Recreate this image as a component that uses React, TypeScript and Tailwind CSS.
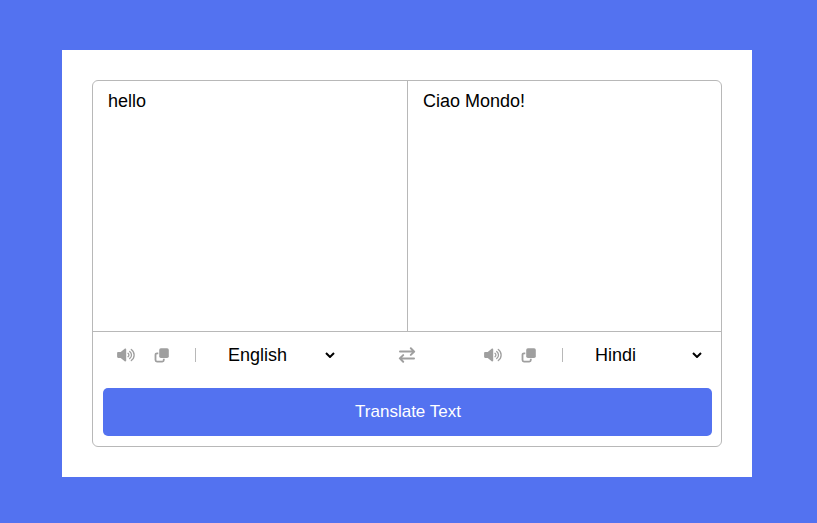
function VolumeIcon() {
  return (
    <svg className="h-4 w-[19px]" viewBox="0 0 19 16" fill="none">
      <path fill="currentColor" d="M1.2 5.1h2.5L7.7 1.8c.6-.5 1.5-.1 1.5.7v11c0 .8-.9 1.2-1.5.7l-4-3.3H1.2C.6 10.9.1 10.4.1 9.8V6.2c0-.6.5-1.1 1.1-1.1Z" />
      <path stroke="currentColor" strokeWidth="1.3" strokeLinecap="round" d="M11 6.3c1.2.9 1.2 2.5 0 3.4M12.7 4.4c2.4 1.9 2.4 5.3 0 7.2M14.3 2.4c3.8 2.9 3.8 8.3 0 11.2" />
    </svg>
  );
}

function CopyIcon() {
  return (
    <svg className="size-[15px]" viewBox="0 0 15 15" fill="none">
      <rect x="5.2" y="0.3" width="9.6" height="9.6" rx="1.7" fill="currentColor" />
      <path stroke="currentColor" strokeWidth="1.8" strokeLinejoin="round" d="M4.3 5.3H3c-.9 0-1.5.6-1.5 1.5v5.3c0 .9.6 1.5 1.5 1.5h5.3c.9 0 1.5-.6 1.5-1.5v-1.3" />
    </svg>
  );
}

function SwapIcon() {
  return (
    <svg className="ml-[46px] h-[18px] w-[18px] text-[#9f9f9f]" viewBox="0 0 18 18" fill="none" stroke="currentColor" strokeWidth="2" strokeLinecap="round" strokeLinejoin="round">
      <path d="M2 5.6h14M12.8 2.3 16.2 5.6l-3.4 3.3M16 12.4H2M5.2 9.1 1.8 12.4l3.4 3.3" />
    </svg>
  );
}

function Controls({ language }: { language: string }) {
  return (
    <div className="flex h-full w-[236px] items-center">
      <div className="flex w-[69px] items-center gap-[18px] pl-px text-[#9f9f9f]">
        <VolumeIcon />
        <CopyIcon />
      </div>
      <div className="ml-[10px] h-[14px] w-px bg-[#b8b8b8]" />
      <button className="ml-8 flex w-[107px] items-center justify-between text-lg leading-[21px]">
        {language}
        <svg className="h-[6px] w-[10px]" viewBox="0 0 10 6" fill="none" stroke="black" strokeWidth="2">
          <path d="M1 1 5 5 9 1" />
        </svg>
      </button>
    </div>
  );
}

export default function App() {
  return (
    <main className="flex h-[523px] w-full justify-center bg-[#5372f0] pr-[3px] pt-[50px] font-['Liberation_Sans',Arial,sans-serif] text-black">
      <div className="h-[427px] w-[690px] bg-white p-[30px]">
        <div className="h-[367px] w-[630px] rounded-md border border-[#b8b8b8]">
          <div className="flex h-[251px] border-b border-[#b8b8b8] text-lg leading-[21px]">
            <div className="w-[315px] border-r border-[#b8b8b8] px-[15px] py-[10px]">hello</div>
            <div className="flex-1 px-[15px] py-[10px]">Ciao Mondo!</div>
          </div>
          <div className="flex h-[46px] items-center pl-[23px]">
            <Controls language="English" />
            <SwapIcon />
            <div className="ml-[67px]"><Controls language="Hindi" /></div>
          </div>
          <button className="ml-[10px] mt-[10px] block h-12 w-[609px] rounded-[5px] bg-[#5372f0] pl-px text-[17px] text-white">Translate Text</button>
        </div>
      </div>
    </main>
  );
}
